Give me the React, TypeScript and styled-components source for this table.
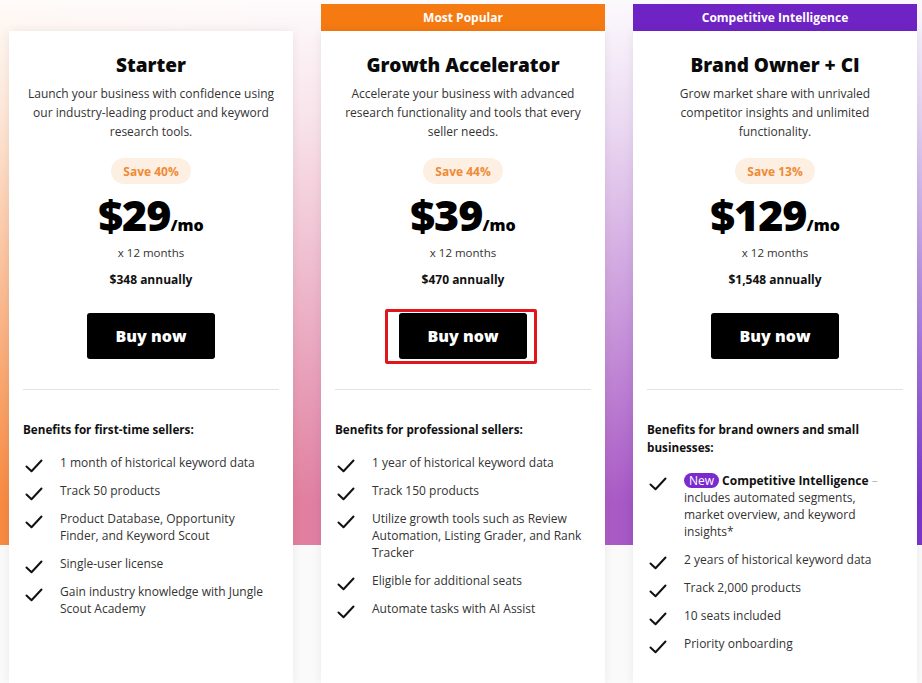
import React from "react";
import styled, { createGlobalStyle } from "styled-components";

const GlobalStyle = createGlobalStyle`
  html, body { margin: 0; padding: 0; }
  body {
    font-family: "Open Sans", "DejaVu Sans", sans-serif;
    color: #222;
    background: #fafafa;
  }
`;

const Page = styled.div`
  height: 683px;
  overflow: hidden;
  box-sizing: border-box;
  padding: 4px 0 0 9px;
  background-color: #fafafa;
  background-image:
    linear-gradient(to bottom, rgba(255, 255, 255, 0.97) 0%, rgba(255, 255, 255, 0.78) 22%, rgba(255, 255, 255, 0) 92%),
    linear-gradient(to right, #f88a40 0%, #ec8a8a 18%, #e07fa2 34%, #cc76bf 55%, #9a4ec8 72%, #7a36c9 100%);
  background-size: 100% 545px;
  background-repeat: no-repeat;
  display: flex;
  gap: 28px;
  align-items: stretch;
`;

const Column = styled.div`
  width: 284px;
  display: flex;
  flex-direction: column;
`;

const Band = styled.div<{ $color?: string }>`
  height: 27px;
  flex: none;
  background: ${(p) => p.$color ?? "transparent"};
  color: #fff;
  font-weight: 700;
  font-size: 12px;
  display: flex;
  align-items: center;
  justify-content: center;
`;

const Card = styled.div`
  flex: 1;
  background: #fff;
  box-shadow: 0 0 10px rgba(0, 0, 0, 0.07);
  padding: 22px 14px 0;
  display: flex;
  flex-direction: column;
  align-items: center;
`;

const Title = styled.h2`
  margin: 0;
  font-size: 19px;
  line-height: 24px;
  font-weight: 800;
  color: #0a0a0a;
  text-align: center;
`;

const Desc = styled.p`
  margin: 7px 0 0;
  font-size: 12px;
  line-height: 19px;
  color: #333;
  text-align: center;
  padding: 0 4px;
`;

const Save = styled.span`
  margin-top: 17px;
  height: 26px;
  padding: 0 12px;
  border-radius: 13px;
  background: #fdf0e3;
  color: #ef8a35;
  font-size: 12px;
  font-weight: 700;
  display: inline-flex;
  align-items: center;
`;

const Price = styled.div`
  margin-top: 9px;
  height: 44px;
  display: flex;
  align-items: baseline;
  color: #000;
`;

const Amount = styled.span`
  font-size: 43px;
  line-height: 44px;
  font-weight: 800;
  letter-spacing: -1px;
`;

const Per = styled.span`
  font-size: 16px;
  font-weight: 800;
`;

const Months = styled.div`
  margin-top: 8px;
  font-size: 11.5px;
  line-height: 16px;
  color: #333;
`;

const Annual = styled.div`
  margin-top: 11px;
  font-size: 12px;
  line-height: 16px;
  font-weight: 700;
  color: #111;
`;

const ButtonWrap = styled.div`
  margin-top: 25px;
  position: relative;
`;

const BuyButton = styled.button`
  width: 128px;
  height: 46px;
  border: none;
  border-radius: 3px;
  background: #000;
  color: #fff;
  font-family: inherit;
  font-size: 16px;
  font-weight: 800;
  cursor: pointer;
`;

const Highlight = styled.span`
  position: absolute;
  top: -4px;
  bottom: -5px;
  left: -14px;
  right: -10px;
  border: 3px solid #e1151c;
  border-radius: 2px;
  pointer-events: none;
`;

const Divider = styled.hr`
  align-self: stretch;
  margin: 30px 0 0;
  border: none;
  border-top: 1px solid #e4e4e4;
`;

const BenefitsTitle = styled.h3`
  align-self: stretch;
  margin: 30px 0 0;
  font-size: 11.7px;
  line-height: 18px;
  font-weight: 700;
  color: #111;
  padding-right: 30px;
`;

const List = styled.ul`
  align-self: stretch;
  list-style: none;
  margin: 16px 0 0;
  padding: 0;
  display: flex;
  flex-direction: column;
  gap: 11px;
`;

const Item = styled.li`
  display: flex;
  align-items: flex-start;
  gap: 17px;
  padding: 0 5px 0 2px;
  font-size: 12px;
  line-height: 17px;
  color: #333;
`;

const Check = styled.svg`
  flex: none;
  width: 18px;
  height: 14px;
  margin: 5px 0 -3px;
`;

const NewTag = styled.span`
  display: inline-block;
  background: #7a2bd0;
  color: #fff;
  border-radius: 8px;
  padding: 0 5px;
  line-height: 15px;
  vertical-align: top;
  margin: 1px 3px 0 0;
`;

const Strong = styled.strong`
  font-weight: 700;
  color: #111;
`;

const Dash = styled.span`
  color: #bbb;
`;

const CheckIcon = () => (
  <Check viewBox="0 0 18 14">
    <path d="M1.5 7.5 L6.5 12.2 L16.5 1.5" fill="none" stroke="#111" strokeWidth="2" strokeLinecap="round" strokeLinejoin="round" />
  </Check>
);

type Plan = {
  band?: { label: string; color: string };
  title: string;
  desc: string;
  save: string;
  amount: string;
  annual: string;
  highlight?: boolean;
  benefitsTitle: string;
  items: React.ReactNode[];
};

const plans: Plan[] = [
  {
    title: "Starter",
    desc: "Launch your business with confidence using our industry-leading product and keyword research tools.",
    save: "Save 40%",
    amount: "$29",
    annual: "$348 annually",
    benefitsTitle: "Benefits for first-time sellers:",
    items: [
      "1 month of historical keyword data",
      "Track 50 products",
      "Product Database, Opportunity Finder, and Keyword Scout",
      "Single-user license",
      "Gain industry knowledge with Jungle Scout Academy",
    ],
  },
  {
    band: { label: "Most Popular", color: "#f57a12" },
    title: "Growth Accelerator",
    desc: "Accelerate your business with advanced research functionality and tools that every seller needs.",
    save: "Save 44%",
    amount: "$39",
    annual: "$470 annually",
    highlight: true,
    benefitsTitle: "Benefits for professional sellers:",
    items: [
      "1 year of historical keyword data",
      "Track 150 products",
      "Utilize growth tools such as Review Automation, Listing Grader, and Rank Tracker",
      "Eligible for additional seats",
      "Automate tasks with AI Assist",
    ],
  },
  {
    band: { label: "Competitive Intelligence", color: "#6f23c5" },
    title: "Brand Owner + CI",
    desc: "Grow market share with unrivaled competitor insights and unlimited functionality.",
    save: "Save 13%",
    amount: "$129",
    annual: "$1,548 annually",
    benefitsTitle: "Benefits for brand owners and small businesses:",
    items: [
      <>
        <NewTag>New</NewTag>
        <Strong>Competitive Intelligence</Strong> <Dash>–</Dash> includes automated segments, market overview, and keyword insights*
      </>,
      "2 years of historical keyword data",
      "Track 2,000 products",
      "10 seats included",
      "Priority onboarding",
    ],
  },
];

export default function App() {
  return (
    <>
      <GlobalStyle />
      <Page>
        {plans.map((p) => (
          <Column key={p.title}>
            <Band $color={p.band?.color}>{p.band?.label}</Band>
            <Card>
              <Title>{p.title}</Title>
              <Desc>{p.desc}</Desc>
              <Save>{p.save}</Save>
              <Price>
                <Amount>{p.amount}</Amount>
                <Per>/mo</Per>
              </Price>
              <Months>x 12 months</Months>
              <Annual>{p.annual}</Annual>
              <ButtonWrap>
                <BuyButton>Buy now</BuyButton>
                {p.highlight && <Highlight />}
              </ButtonWrap>
              <Divider />
              <BenefitsTitle>{p.benefitsTitle}</BenefitsTitle>
              <List>
                {p.items.map((it, i) => (
                  <Item key={i}>
                    <CheckIcon />
                    <span>{it}</span>
                  </Item>
                ))}
              </List>
            </Card>
          </Column>
        ))}
      </Page>
    </>
  );
}
